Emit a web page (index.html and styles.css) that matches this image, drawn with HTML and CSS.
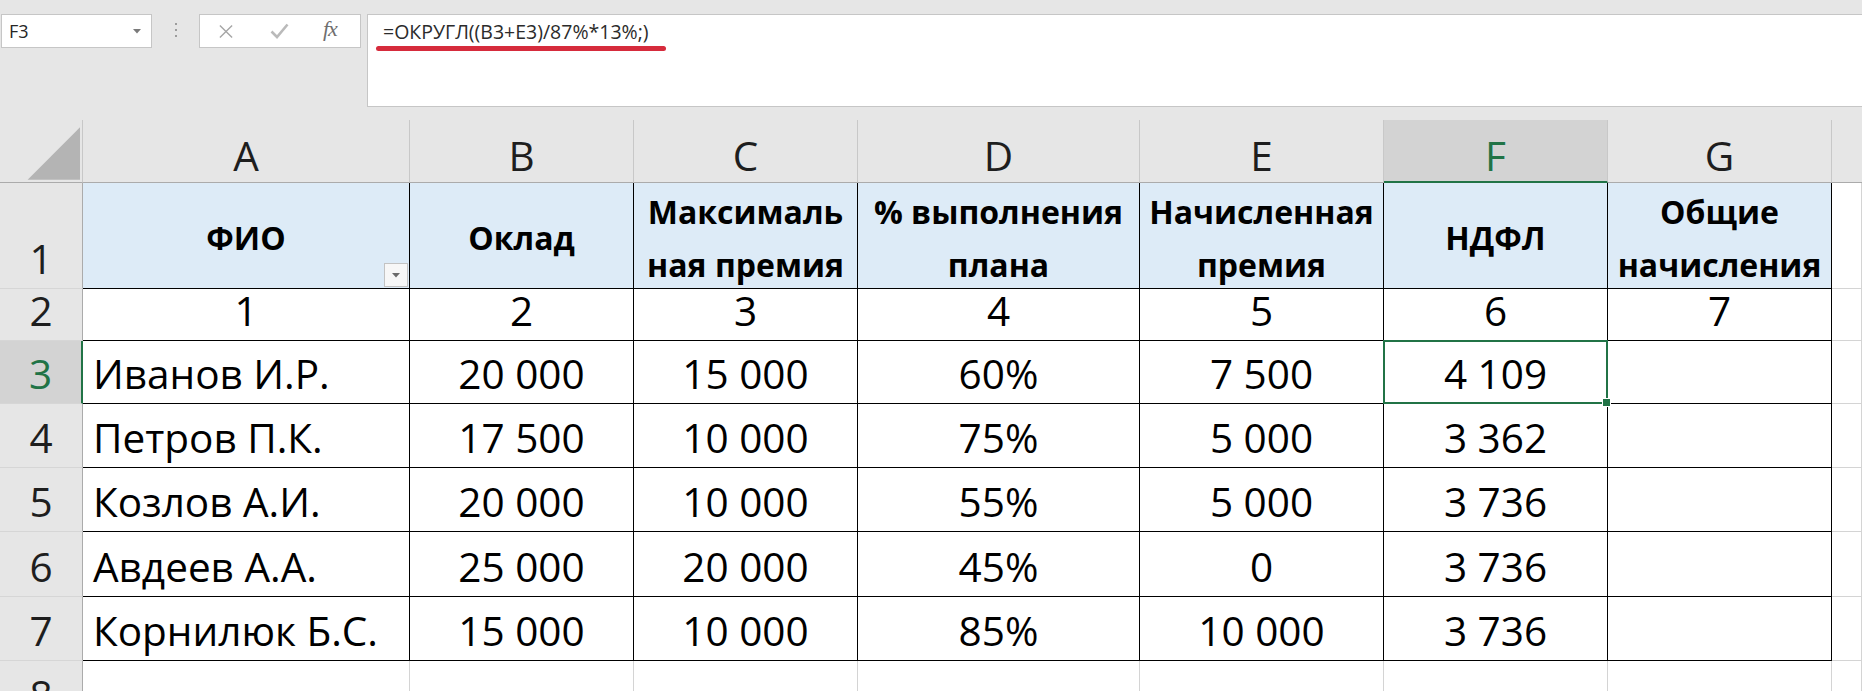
FILE: index.html
```html
<!DOCTYPE html>
<html lang="ru">
<head>
<meta charset="utf-8">
<title>Excel</title>
<link rel="stylesheet" href="styles.css">
</head>
<body>
<div class="app">
  <div class="fbar">
    <div class="namebox">
      <span class="nb-text">F3</span>
      <svg class="nb-arrow" width="8" height="5" viewBox="0 0 8 5"><path d="M0 0h8L4 4.5z" fill="#7a7a7a"/></svg>
    </div>
    <div class="grip"><i></i><i></i><i></i></div>
    <div class="fbtns">
      <svg class="ic-x" viewBox="0 0 16 16" width="16" height="15"><path d="M1.5 1.5L14.5 14.5M14.5 1.5L1.5 14.5" stroke="#a6a6a6" stroke-width="1.5" fill="none"/></svg>
      <svg class="ic-ok" viewBox="0 0 19 16" width="19" height="16"><path d="M1.5 8.5L7 14L17.5 1.5" stroke="#bababa" stroke-width="2.6" fill="none"/></svg>
      <span class="fx">fx</span>
    </div>
    <div class="finput">
      <div class="formula">=ОКРУГЛ((B3+E3)/87%*13%;)</div>
      <div class="redline"></div>
    </div>
  </div>

  <div class="sheet">
    <div class="ch corner"><svg width="83" height="62" viewBox="0 0 83 62"><path d="M81 7V60H28z" fill="#b4b4b4"/></svg></div>
    <div class="ch">A</div>
    <div class="ch">B</div>
    <div class="ch">C</div>
    <div class="ch">D</div>
    <div class="ch">E</div>
    <div class="ch sel">F</div>
    <div class="ch">G</div>
    <div class="ch last"></div>

    <div class="rh">1</div>
    <div class="c h filt"><span>ФИО</span><div class="filter"><svg width="8" height="5" viewBox="0 0 8 5"><path d="M0 0h8L4 4.5z" fill="#6a6a6a"/></svg></div></div>
    <div class="c h"><span>Оклад</span></div>
    <div class="c h"><span>Максималь</span><span>ная премия</span></div>
    <div class="c h"><span>% выполнения</span><span>плана</span></div>
    <div class="c h"><span>Начисленная</span><span>премия</span></div>
    <div class="c h"><span>НДФЛ</span></div>
    <div class="c h"><span>Общие</span><span>начисления</span></div>
    <div class="g"></div>

    <div class="rh">2</div>
    <div class="c">1</div>
    <div class="c">2</div>
    <div class="c">3</div>
    <div class="c">4</div>
    <div class="c">5</div>
    <div class="c">6</div>
    <div class="c">7</div>
    <div class="g"></div>

    <div class="rh sel">3</div>
    <div class="c name">Иванов И.Р.</div>
    <div class="c">20 000</div>
    <div class="c">15 000</div>
    <div class="c">60%</div>
    <div class="c">7 500</div>
    <div class="c active">4 109</div>
    <div class="c"></div>
    <div class="g"></div>

    <div class="rh">4</div>
    <div class="c name">Петров П.К.</div>
    <div class="c">17 500</div>
    <div class="c">10 000</div>
    <div class="c">75%</div>
    <div class="c">5 000</div>
    <div class="c">3 362</div>
    <div class="c"></div>
    <div class="g"></div>

    <div class="rh">5</div>
    <div class="c name">Козлов А.И.</div>
    <div class="c">20 000</div>
    <div class="c">10 000</div>
    <div class="c">55%</div>
    <div class="c">5 000</div>
    <div class="c">3 736</div>
    <div class="c"></div>
    <div class="g"></div>

    <div class="rh">6</div>
    <div class="c name">Авдеев А.А.</div>
    <div class="c">25 000</div>
    <div class="c">20 000</div>
    <div class="c">45%</div>
    <div class="c">0</div>
    <div class="c">3 736</div>
    <div class="c"></div>
    <div class="g"></div>

    <div class="rh">7</div>
    <div class="c name">Корнилюк Б.С.</div>
    <div class="c">15 000</div>
    <div class="c">10 000</div>
    <div class="c">85%</div>
    <div class="c">10 000</div>
    <div class="c">3 736</div>
    <div class="c"></div>
    <div class="g"></div>

    <div class="rh">8</div>
    <div class="g"></div>
    <div class="g"></div>
    <div class="g"></div>
    <div class="g"></div>
    <div class="g"></div>
    <div class="g"></div>
    <div class="g"></div>
    <div class="g"></div>
  </div>
</div>
</body>
</html>
```

FILE: styles.css
```css
* { box-sizing: border-box; }
html, body { margin: 0; padding: 0; }
body {
  background: #e6e6e6;
  width: 1862px;
  height: 691px;
  overflow: hidden;
  font-family: "Open Sans", "Noto Sans", sans-serif;
  color: #000;
}

/* formula bar */
.fbar {
  display: flex;
  align-items: flex-start;
  height: 120px;
  padding: 14px 0 0 1px;
}
.namebox {
  width: 151px;
  height: 34px;
  background: #fff;
  border: 1px solid #c6c6c6;
  display: flex;
  align-items: center;
  justify-content: space-between;
  padding: 0 10px 0 7px;
}
.nb-text { font: 18px "Open Sans", sans-serif; color: #262626; }
.grip {
  width: 47px;
  height: 34px;
  display: flex;
  flex-direction: column;
  align-items: center;
  gap: 4px;
  padding-top: 9px;
}
.grip i { display: block; width: 2px; height: 2px; background: #9c9c9c; }
.fbtns {
  width: 162px;
  height: 34px;
  background: #fff;
  border: 1px solid #c6c6c6;
  display: flex;
  align-items: center;
  padding-left: 18px;
}
.ic-ok { margin-left: 36px; }
.fx {
  margin-left: 34px;
  font: italic 22px "Liberation Serif", serif;
  color: #6f6f6f;
  letter-spacing: -1px;
  margin-top: -4px;
}
.finput {
  margin-left: 6px;
  flex: 1;
  height: 93px;
  background: #fff;
  border: 1px solid #c6c6c6;
  border-right: none;
  padding: 5px 0 0 15px;
}
.formula {
  font: 19.5px "Open Sans", sans-serif;
  color: #2b2b2b;
  line-height: 24px;
  white-space: nowrap;
}
.redline {
  width: 290px;
  height: 5px;
  margin: 2px 0 0 -7px;
  background: #d62b3c;
  border-radius: 3px;
}

/* sheet */
.sheet {
  display: grid;
  grid-template-columns: 83px 327px 224px 224px 282px 244px 224px 224px 30px;
  grid-template-rows: 63px 106px 52px 63px 64px 64px 65px 64px 64px;
}
.ch {
  background: #e6e6e6;
  border-right: 1px solid #c8c8c8;
  border-bottom: 1px solid #ababab;
  display: flex;
  align-items: flex-end;
  justify-content: center;
  font-size: 40.5px;
  line-height: 1;
  padding-bottom: 6px;
  color: #1e1e1e;
}
.ch.corner { padding: 0; align-items: stretch; justify-content: flex-start; }
.ch.corner svg { display: block; }
.ch.last { border-right: none; }
.ch.sel {
  background: #d3d3d3;
  color: #217346;
  border-bottom: 2px solid #217346;
  padding-bottom: 5px;
}
.rh {
  background: #e6e6e6;
  border-right: 1px solid #ababab;
  border-bottom: 1px solid #d6d6d6;
  display: flex;
  align-items: flex-end;
  justify-content: center;
  font-size: 40.5px;
  line-height: 1;
  padding-bottom: 9px;
  color: #1e1e1e;
}
.rh.sel {
  background: #d3d3d3;
  color: #217346;
  border-right: 2px solid #217346;
}
.c {
  background: #fff;
  border-right: 1px solid #000;
  border-bottom: 1px solid #000;
  display: flex;
  align-items: flex-end;
  justify-content: center;
  font-size: 40.5px;
  line-height: 1;
  padding-bottom: 9px;
  white-space: nowrap;
}
.c.name { justify-content: flex-start; padding-left: 10px; }
.c.h {
  background: #ddebf7;
  font-weight: 700;
  font-size: 32px;
  line-height: 53px;
  flex-direction: column;
  align-items: center;
  justify-content: center;
  padding: 4px 0 0;
}
.c.h span { display: block; }
.filt { position: relative; }
.filter {
  position: absolute;
  right: 1px;
  bottom: 1px;
  width: 24px;
  height: 24px;
  background: #f7f7f7;
  border: 1px solid #c3c3c3;
  display: flex;
  align-items: center;
  justify-content: center;
}
.filter svg { display: block; }
.active { position: relative; }
.active::after {
  content: "";
  position: absolute;
  left: -1px;
  top: -1px;
  right: -1px;
  bottom: -1px;
  border: 2px solid #217346;
}
.active::before {
  content: "";
  position: absolute;
  right: -4px;
  bottom: -4px;
  width: 7px;
  height: 7px;
  background: #217346;
  border: 1px solid #fff;
  z-index: 2;
}
.g {
  background: #fff;
  border-right: 1px solid #d4d4d4;
  border-bottom: 1px solid #d4d4d4;
}
```
